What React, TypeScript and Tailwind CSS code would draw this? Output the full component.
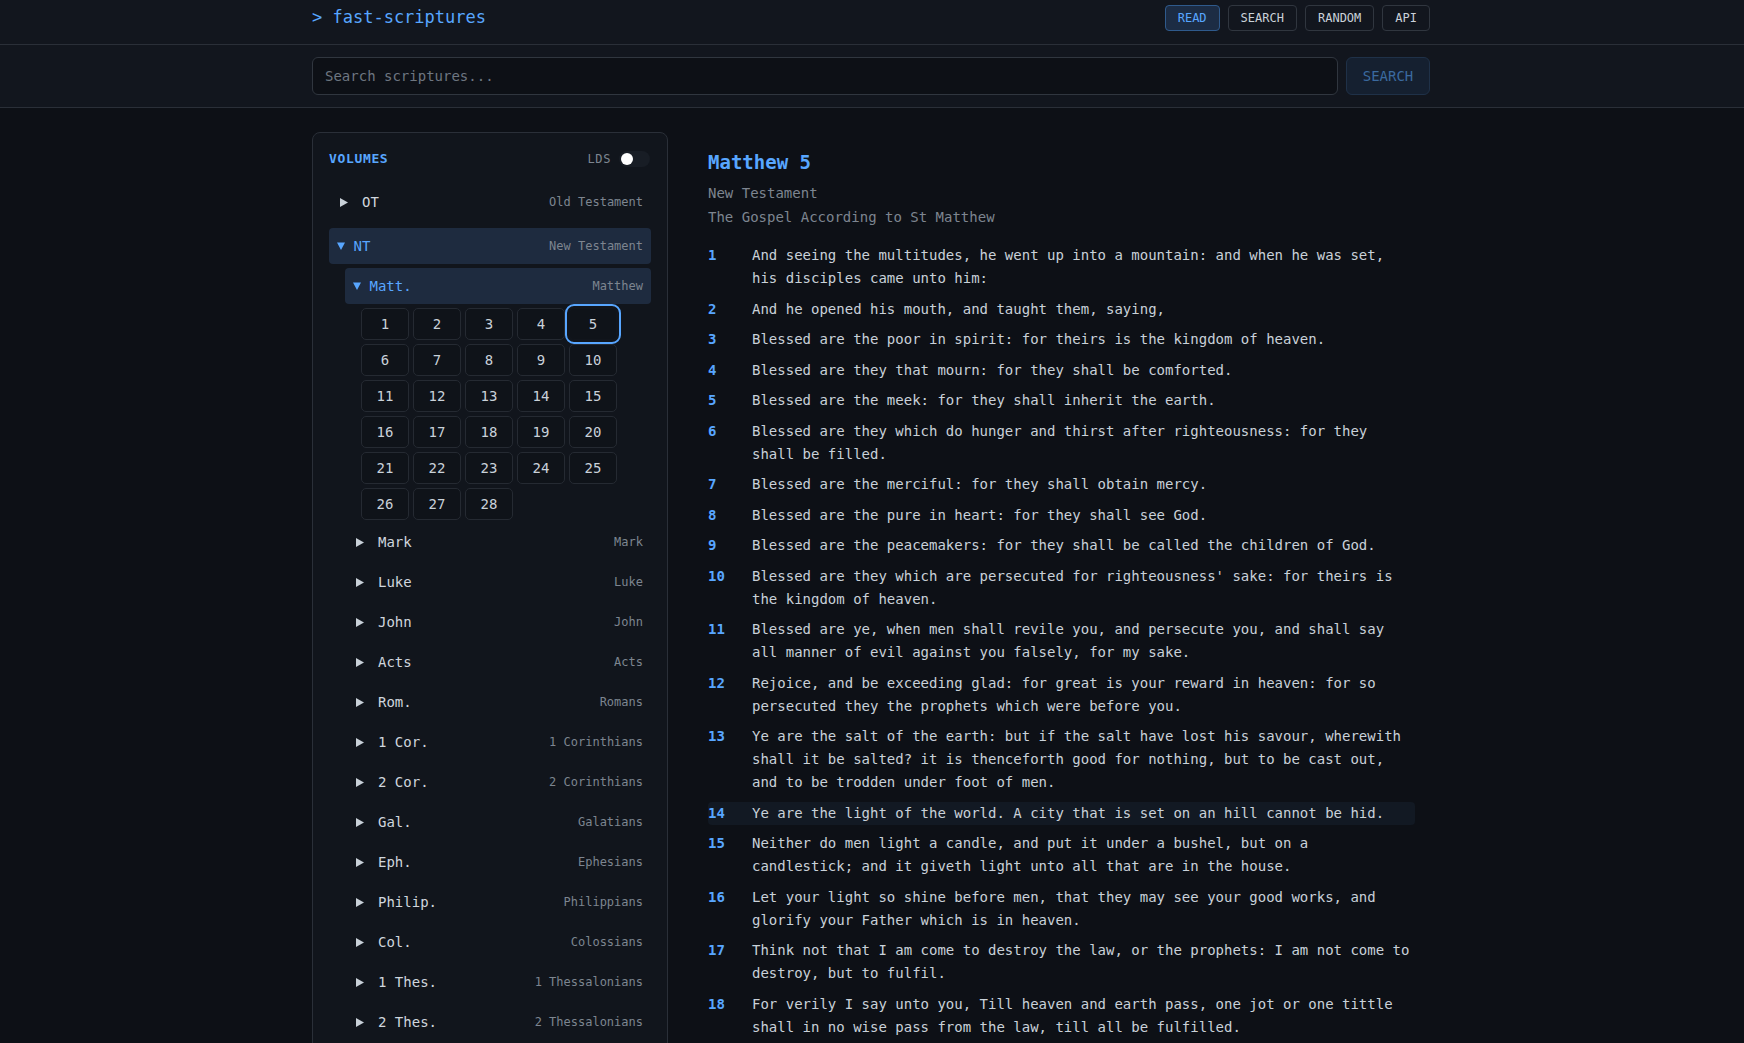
import { useState } from "react";

interface Verse {
  n: number;
  text: string;
}

const verses: Verse[] = [
  { n: 1, text: "And seeing the multitudes, he went up into a mountain: and when he was set, his disciples came unto him:" },
  { n: 2, text: "And he opened his mouth, and taught them, saying," },
  { n: 3, text: "Blessed are the poor in spirit: for theirs is the kingdom of heaven." },
  { n: 4, text: "Blessed are they that mourn: for they shall be comforted." },
  { n: 5, text: "Blessed are the meek: for they shall inherit the earth." },
  { n: 6, text: "Blessed are they which do hunger and thirst after righteousness: for they shall be filled." },
  { n: 7, text: "Blessed are the merciful: for they shall obtain mercy." },
  { n: 8, text: "Blessed are the pure in heart: for they shall see God." },
  { n: 9, text: "Blessed are the peacemakers: for they shall be called the children of God." },
  { n: 10, text: "Blessed are they which are persecuted for righteousness' sake: for theirs is the kingdom of heaven." },
  { n: 11, text: "Blessed are ye, when men shall revile you, and persecute you, and shall say all manner of evil against you falsely, for my sake." },
  { n: 12, text: "Rejoice, and be exceeding glad: for great is your reward in heaven: for so persecuted they the prophets which were before you." },
  { n: 13, text: "Ye are the salt of the earth: but if the salt have lost his savour, wherewith shall it be salted? it is thenceforth good for nothing, but to be cast out, and to be trodden under foot of men." },
  { n: 14, text: "Ye are the light of the world. A city that is set on an hill cannot be hid." },
  { n: 15, text: "Neither do men light a candle, and put it under a bushel, but on a candlestick; and it giveth light unto all that are in the house." },
  { n: 16, text: "Let your light so shine before men, that they may see your good works, and glorify your Father which is in heaven." },
  { n: 17, text: "Think not that I am come to destroy the law, or the prophets: I am not come to destroy, but to fulfil." },
  { n: 18, text: "For verily I say unto you, Till heaven and earth pass, one jot or one tittle shall in no wise pass from the law, till all be fulfilled." },
  { n: 19, text: "Whosoever therefore shall break one of these least commandments, and shall teach men so, he shall be called the least in the kingdom of heaven: but whosoever shall do and teach them, he shall be called great in the kingdom of heaven." },
  { n: 20, text: "For I say unto you, That except your righteousness shall exceed the righteousness of the scribes and Pharisees, ye shall in no case enter into the kingdom of heaven." },
];

const books: [string, string][] = [
  ["Mark", "Mark"],
  ["Luke", "Luke"],
  ["John", "John"],
  ["Acts", "Acts"],
  ["Rom.", "Romans"],
  ["1 Cor.", "1 Corinthians"],
  ["2 Cor.", "2 Corinthians"],
  ["Gal.", "Galatians"],
  ["Eph.", "Ephesians"],
  ["Philip.", "Philippians"],
  ["Col.", "Colossians"],
  ["1 Thes.", "1 Thessalonians"],
  ["2 Thes.", "2 Thessalonians"],
  ["1 Tim.", "1 Timothy"],
  ["2 Tim.", "2 Timothy"],
  ["Titus", "Titus"],
];

const Closed = () => (
  <svg width="8" height="9" viewBox="0 0 8 9" className="fill-[#c9d1d9]">
    <polygon points="0,0 8,4.5 0,9" />
  </svg>
);

const Open = () => (
  <svg width="8" height="8" viewBox="0 0 8 8" className="fill-[#58a6ff]">
    <polygon points="0,0.5 8,0.5 4,8" />
  </svg>
);

const CollapsedRow = ({ abbr, name }: { abbr: string; name: string }) => (
  <div className="flex items-center h-9 px-2 rounded">
    <span className="w-[25px] pl-[3px] flex items-center">
      <Closed />
    </span>
    <span className="text-[14px] text-[#d0d6de]">{abbr}</span>
    <span className="ml-auto text-[12px] text-[#7d8590]">{name}</span>
  </div>
);

const ExpandedRow = ({ abbr, name }: { abbr: string; name: string }) => (
  <div className="flex items-center h-9 px-2 rounded bg-[#1e2b3f]">
    <span className="w-[16.5px] flex items-center">
      <Open />
    </span>
    <span className="text-[14px] text-[#58a6ff]">{abbr}</span>
    <span className="ml-auto text-[12px] text-[#7d8590]">{name}</span>
  </div>
);

export default function App() {
  const [chapter, setChapter] = useState(5);

  return (
    <div className="min-h-screen bg-[#0d1016] text-[#c9d1d9] font-['DejaVu_Sans_Mono',monospace]">
      {/* Top bar */}
      <header className="bg-[#12161e] border-b border-[#2a2f38]">
        <div className="max-w-[1120px] mx-auto h-[44px] flex items-start justify-between pt-[5px] pr-[2px]">
          <div className="h-[26px] flex items-center text-[17px] text-[#58a6ff]">
            &gt; fast-scriptures
          </div>
          <nav className="flex gap-2">
            <button className="h-[26px] px-3 rounded border border-[#2f5a8c] bg-[#1c2c44] text-[12px] text-[#58a6ff]">
              READ
            </button>
            <button className="h-[26px] px-3 rounded border border-[#30363f] text-[12px] text-[#c9d1d9]">
              SEARCH
            </button>
            <button className="h-[26px] px-3 rounded border border-[#30363f] text-[12px] text-[#c9d1d9]">
              RANDOM
            </button>
            <button className="h-[26px] px-3 rounded border border-[#30363f] text-[12px] text-[#c9d1d9]">
              API
            </button>
          </nav>
        </div>
      </header>

      {/* Search */}
      <div className="bg-[#12161e] border-b border-[#2a2f38]">
        <div className="max-w-[1120px] mx-auto py-3 pr-[2px] flex gap-2">
          <input
            placeholder="Search scriptures..."
            className="flex-1 h-[38px] px-3 rounded-md border border-[#30363f] bg-[#0d1016] text-[14px] text-[#c9d1d9] placeholder:text-[#6e7681] outline-none"
          />
          <button className="w-[84px] h-[38px] rounded-md border border-[#1f3148] bg-[#152030] text-[14px] text-[#3b6a9f]">
            SEARCH
          </button>
        </div>
      </div>

      <div className="max-w-[1120px] mx-auto pt-6 pr-[2px] flex gap-10">
        {/* Sidebar */}
        <aside className="w-[356px] shrink-0 self-start rounded-lg border border-[#2a2f38] bg-[#11151c] p-4">
          <div className="h-5 mb-[15px] flex items-center justify-between">
            <span className="text-[13px] font-bold tracking-wider text-[#58a6ff]">VOLUMES</span>
            <div className="flex items-center gap-2 pr-[1px]">
              <span className="text-[12px] tracking-wider text-[#7d8590]">LDS</span>
              <div className="w-[31px] h-4 rounded-full bg-[#181d25] flex items-center px-[2px]">
                <div className="w-3 h-3 rounded-full bg-white" />
              </div>
            </div>
          </div>

          <div className="flex flex-col gap-2">
            <CollapsedRow abbr="OT" name="Old Testament" />
            <div className="flex flex-col gap-1">
              <ExpandedRow abbr="NT" name="New Testament" />
              <div className="ml-4 flex flex-col gap-1">
                <ExpandedRow abbr="Matt." name="Matthew" />
                <div className="ml-4 grid grid-cols-[repeat(5,48px)] gap-1">
                  {Array.from({ length: 28 }, (_, i) => i + 1).map((c) => (
                    <button
                      key={c}
                      onClick={() => setChapter(c)}
                      className={
                        c === chapter
                          ? "h-8 rounded-[5px] border border-[#11151c] bg-[#0f1319] text-[14px] text-[#c9d1d9] outline-2 outline-offset-2 outline-[#58a6ff]"
                          : "h-8 rounded-[5px] border border-[#252a32] bg-[#0f1319] text-[14px] text-[#c9d1d9]"
                      }
                    >
                      {c}
                    </button>
                  ))}
                </div>
                {books.map(([abbr, name]) => (
                  <CollapsedRow key={abbr} abbr={abbr} name={name} />
                ))}
              </div>
            </div>
          </div>
        </aside>

        {/* Reader */}
        <main className="flex-1 pt-4 pr-[15px]">
          <h1 className="text-[19px] leading-[28px] font-semibold text-[#58a6ff]">Matthew 5</h1>
          <div className="mt-[5px] text-[14px] leading-[24px] text-[#7d8590]">
            <div>New Testament</div>
            <div>The Gospel According to St Matthew</div>
          </div>

          <div className="mt-[15px] flex flex-col gap-[7.5px]">
            {verses.map((v) => (
              <div
                key={v.n}
                className={v.n === 14 ? "flex rounded-sm bg-[#121923]" : "flex"}
              >
                <span className="w-[44px] shrink-0 text-[14px] leading-[23px] font-semibold text-[#58a6ff]">
                  {v.n}
                </span>
                <p className="flex-1 text-[14px] leading-[23px] text-[#c9d1d9]">{v.text}</p>
              </div>
            ))}
          </div>
        </main>
      </div>
    </div>
  );
}
